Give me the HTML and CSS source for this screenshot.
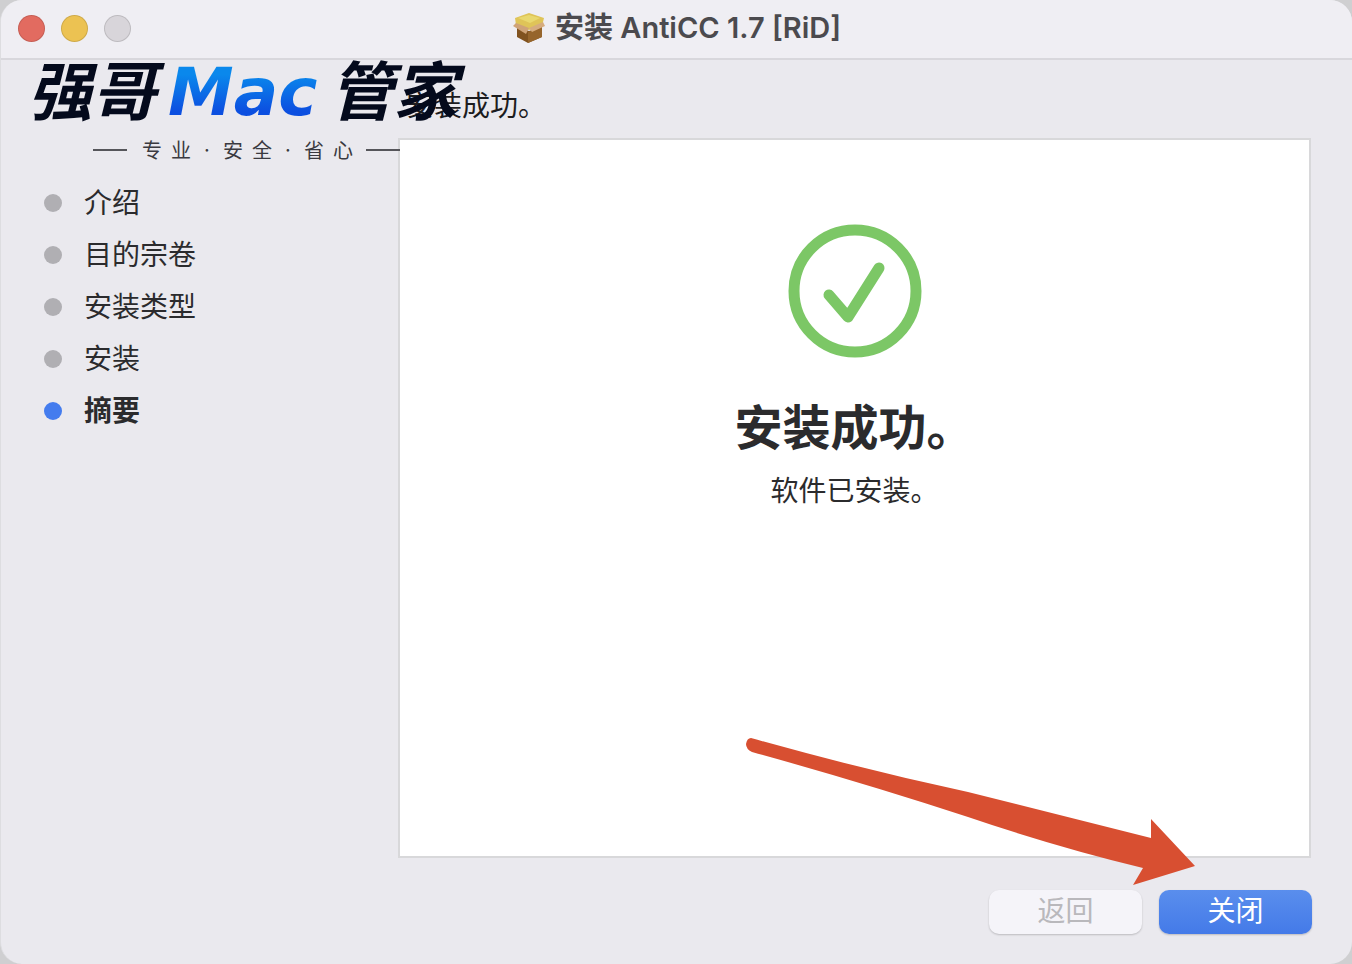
FILE: index.html
```
<!DOCTYPE html>
<html lang="zh-CN">
<head>
  <meta charset="UTF-8" />
  <meta name="viewport" content="width=device-width, initial-scale=1.0"/>
  <title>安装 AntiCC 1.7 [RiD]</title>
  <link rel="stylesheet" href="styles.css">
</head>
<body>
  <div class="window">
    <header class="titlebar">
      <div class="lights">
        <button class="light red" aria-label="关闭窗口"></button>
        <button class="light yellow" aria-label="最小化"></button>
        <button class="light grey" aria-label="缩放" disabled></button>
      </div>
      <svg class="box-icon" viewBox="0 0 34 32" aria-hidden="true">
        <path d="M5 15 L17 19 L30 15 V25 L16 31 L5 25 Z" fill="#80521f"/>
        <path d="M16 20 L30 15 V25 L16 31 Z" fill="#96652c"/>
        <path d="M3 6 L17 1 L32 6 L30 14 L17 18 L4 13 Z" fill="#dfc458"/>
        <path d="M6 6 L17 3 L28 6 L18 11 Z" fill="#e9d86e"/>
        <path d="M4 11 L17 16 L14 22 L1 14 Z" fill="#cfa377"/>
        <path d="M31 10 L33 14 L20 20 L17 16 Z" fill="#d6ac7e"/>
      </svg>
      <h1 class="title">安装 AntiCC 1.7 [RiD]</h1>
    </header>

    <div class="content">
      <nav class="sidebar">
        <ul class="steps">
          <li>介绍</li>
          <li>目的宗卷</li>
          <li>安装类型</li>
          <li>安装</li>
          <li class="active" aria-current="step">摘要</li>
        </ul>
      </nav>

      <main class="main">
        <h2 class="heading">安装成功。</h2>
        <section class="panel">
          <svg class="check" viewBox="0 0 134 134" aria-hidden="true">
            <circle cx="67" cy="67" r="61" />
            <path d="M41 71 L60 93 L91 44" />
          </svg>
          <p class="result">安装成功。</p>
          <p class="detail">软件已安装。</p>
        </section>
        <div class="buttons">
          <button class="btn" disabled>返回</button>
          <button class="btn primary">关闭</button>
        </div>
      </main>
    </div>

    <!-- logo on top of the window -->
    <div class="brand">
      <div class="brand-name">
        <span>强哥</span>
        <span class="mac">Mac</span>
        <span>管家</span>
      </div>
      <div class="tagline">
        <i class="line"></i>
        <span>专</span><span>业</span><span class="dot">·</span>
        <span>安</span><span>全</span><span class="dot">·</span>
        <span>省</span><span>心</span>
        <i class="line"></i>
      </div>
    </div>

    <!-- arrow to the close button -->
    <svg class="arrow" viewBox="0 0 450 148" aria-hidden="true">
      <path d="M5 0 Q115 31 222 54 L405 100 L405 81 L449 128 L387 147 L397 130 Q310 109 222 79 Q115 44 6 14 Q0 11 0 6 Q1 0 5 0 Z" />
    </svg>
  </div>
</body>
</html>
```
FILE: styles.css
```
* {
  box-sizing: border-box;
}

body {
  margin: 0;
  background: #cfcfd1;
  font-family: Inter, "Noto Sans CJK SC", sans-serif;
  color: #2b2b2d;
}

.window {
  position: relative;
  display: flex;
  flex-direction: column;
  min-height: 100vh;
  background: #eae9ee;
  border-left: 1px solid #dddde0;
  border-radius: 22px;
  overflow: hidden;
}

.titlebar {
  display: grid;
  grid-template-columns: 1fr auto auto 1fr;
  align-items: center;
  gap: 9px;
  height: 60px;
  padding: 0 17px 2px;
  background: #efeef3;
  border-bottom: 2px solid #d8d7dc;
}

.lights {
  display: flex;
  gap: 16px;
}

.light {
  width: 27px;
  height: 27px;
  padding: 0;
  border: 1px solid rgba(0, 0, 0, 0.12);
  border-radius: 50%;
}

.red {
  background: #e26b60;
}

.yellow {
  background: #ecc252;
}

.grey {
  background: #d8d5da;
}

.box-icon {
  width: 34px;
  height: 32px;
}

.title {
  margin: 0;
  font-size: 29px;
  line-height: 40px;
  font-weight: 600;
  color: #4b4a4e;
}

.content {
  flex: 1;
  display: flex;
}

.sidebar {
  width: 397px;
  padding: 117px 0 0 43px;
}

.steps {
  margin: 0;
  padding: 0;
  list-style: none;
}

.steps li {
  display: flex;
  align-items: center;
  gap: 22px;
  font-size: 28px;
  line-height: 52px;
}

.steps li::before {
  content: "";
  width: 18px;
  height: 18px;
  border-radius: 50%;
  background: #b0afb3;
}

.steps .active {
  font-weight: 700;
}

.steps .active::before {
  background: #447cee;
}

.main {
  flex: 1;
  display: flex;
  flex-direction: column;
  padding: 26px 40px 30px 0;
}

.heading {
  margin: 0 0 12px;
  padding-left: 8px;
  font-size: 28px;
  line-height: 40px;
  font-weight: 400;
  color: #1c1c1e;
}

.panel {
  flex: 1;
  display: flex;
  flex-direction: column;
  align-items: center;
  margin-right: 1px;
  padding-top: 84px;
  background: #fff;
  border: 2px solid #d8d8da;
}

.check {
  width: 134px;
  height: 134px;
  fill: none;
  stroke: #7cc766;
  stroke-width: 11;
  stroke-linecap: round;
  stroke-linejoin: round;
}

.result {
  margin: 36px 0 0;
  font-size: 48px;
  line-height: 68px;
  font-weight: 700;
}

.detail {
  margin: 9px 0 0;
  font-size: 28px;
  line-height: 40px;
}

.buttons {
  display: flex;
  justify-content: flex-end;
  gap: 17px;
  margin-top: 32px;
}

.btn {
  width: 153px;
  height: 44px;
  padding: 0 0 2px;
  border: none;
  border-radius: 10px;
  background: #f5f4f9;
  box-shadow: 0 1px 2px rgba(0, 0, 0, 0.2);
  font-family: inherit;
  font-size: 28px;
  line-height: 40px;
  color: #b9b8bc;
}

.btn.primary {
  background: linear-gradient(#5a8eed, #447ae8);
  color: #fff;
}

.brand {
  position: absolute;
  top: 50px;
  left: 27px;
  font-family: "Noto Sans CJK SC", sans-serif;
}

.brand-name {
  display: flex;
  align-items: baseline;
  gap: 12px;
  font-size: 64px;
  line-height: 74px;
  font-weight: 700;
  font-style: italic;
  color: #040a1c;
}

.mac {
  font-family: "DejaVu Sans", sans-serif;
  font-size: 66px;
  background: linear-gradient(#0a88ec 25%, #0c4fe0 75%);
  background-clip: text;
  -webkit-background-clip: text;
  color: transparent;
}

.tagline {
  display: flex;
  align-items: center;
  gap: 9px;
  margin-top: 8px;
  padding-left: 65px;
  font-size: 20px;
  line-height: 24px;
  color: #3a3a40;
}

.line {
  width: 34px;
  height: 2px;
  margin-right: 6px;
  background: #55555a;
}

.line:last-child {
  margin: 0 0 0 4px;
}

.dot {
  width: 14px;
  font-family: Inter, sans-serif;
  text-align: center;
}

.arrow {
  position: absolute;
  right: 156px;
  bottom: 78px;
  width: 450px;
  height: 148px;
  fill: #d84f31;
}
```
